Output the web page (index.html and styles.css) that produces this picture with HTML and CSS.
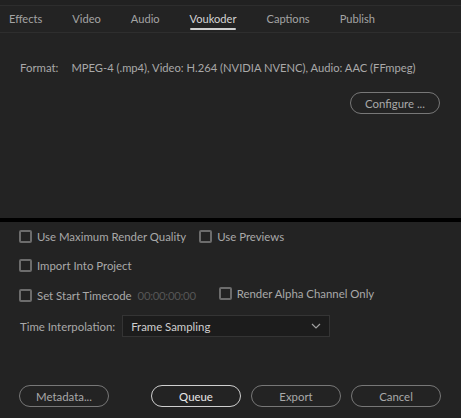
FILE: index.html
```html
<!DOCTYPE html>
<html>
<head>
<meta charset="utf-8">
<link rel="stylesheet" href="styles.css">
</head>
<body>
<div class="dialog">
  <div class="topstrip"></div>
  <nav class="tabs">
    <span class="tab">Effects</span>
    <span class="tab">Video</span>
    <span class="tab">Audio</span>
    <span class="tab active">Voukoder</span>
    <span class="tab">Captions</span>
    <span class="tab">Publish</span>
  </nav>
  <section class="upper">
    <div class="format">
      <span class="format-label">Format:</span>
      <span class="format-value">MPEG-4 (.mp4), Video: H.264 (NVIDIA NVENC), Audio: AAC (FFmpeg)</span>
    </div>
    <div class="configure-row">
      <button class="pill">Configure ...</button>
    </div>
  </section>
  <div class="divider"></div>
  <section class="lower">
    <div class="row r1">
      <label class="check"><span class="box"></span>Use Maximum Render Quality</label>
      <label class="check"><span class="box"></span>Use Previews</label>
    </div>
    <div class="row">
      <label class="check"><span class="box"></span>Import Into Project</label>
    </div>
    <div class="row">
      <label class="check"><span class="box"></span>Set Start Timecode</label>
      <span class="timecode">00:00:00:00</span>
      <label class="check alpha"><span class="box"></span>Render Alpha Channel Only</label>
    </div>
    <div class="row interp">
      <span class="interp-label">Time Interpolation:</span>
      <div class="select">
        <span>Frame Sampling</span>
        <svg class="chev" width="10" height="6" viewBox="0 0 10 6"><path d="M1 1 L5 5 L9 1" fill="none" stroke="#a0a0a0" stroke-width="1.2"/></svg>
      </div>
    </div>
    <div class="buttons">
      <button class="pill">Metadata...</button>
      <div class="right">
        <button class="pill primary">Queue</button>
        <button class="pill">Export</button>
        <button class="pill">Cancel</button>
      </div>
    </div>
  </section>
</div>
</body>
</html>
```
FILE: styles.css
```css
html, body {
  margin: 0;
  padding: 0;
  background: #232323;
}
body {
  font-family: Lato, "Open Sans", sans-serif;
  font-size: 11.4px;
  color: #a9a9a9;
  width: 461px;
  height: 418px;
  overflow: hidden;
}
.dialog {
  display: flex;
  flex-direction: column;
  height: 418px;
}
.topstrip {
  height: 5px;
  background: #212121;
  border-bottom: 1px solid #2d2d2d;
}
.tabs {
  display: flex;
  gap: 30px;
  padding-left: 9px;
  height: 26px;
  border-bottom: 1px solid #2e2e2e;
  align-items: stretch;
  font-size: 11.1px;
}
.tab {
  display: flex;
  align-items: center;
  position: relative;
  padding-bottom: 1px;
  color: #a4a4a4;
}
.tab.active {
  color: #d4d4d4;
}
.tab.active::after {
  content: "";
  position: absolute;
  left: 0;
  right: 0;
  bottom: 2px;
  height: 2px;
  background: #cfcfcf;
  border-radius: 1px;
}
.upper {
  height: 185px;
  display: flex;
  flex-direction: column;
}
.format {
  display: flex;
  gap: 13px;
  padding: 27px 0 0 20px;
  height: 16px;
  line-height: 16px;
}
.format-value {
  font-size: 11.2px;
}
.configure-row {
  display: flex;
  justify-content: flex-end;
  padding: 16px 21px 0 0;
}
.pill {
  font: inherit;
  color: #a9a9a9;
  background: transparent;
  border: 1px solid #777;
  border-radius: 11px;
  width: 90px;
  height: 22px;
  padding: 0;
}
.pill.primary {
  color: #e8e8e8;
  border-color: #cfcfcf;
}
.divider {
  height: 4px;
  background: #000;
}
.lower {
  flex: 1;
  display: flex;
  flex-direction: column;
  padding: 0 0 0 19px;
}
.row {
  display: flex;
  align-items: center;
  height: 30px;
}
.row.r1 {
  height: 28px;
}
.check {
  display: flex;
  align-items: center;
  gap: 5px;
  margin-right: 13px;
}
.box {
  width: 9px;
  height: 9px;
  border: 2px solid #6c6c6c;
  border-radius: 2px;
}
.timecode {
  color: #555;
  margin-left: -7px;
  letter-spacing: -0.3px;
}
.alpha {
  margin-left: 23px;
  position: relative;
  top: -2px;
}
.interp {
  height: 32px;
}
.interp-label {
  margin-left: 1px;
  margin-right: 7px;
}
.select {
  width: 190px;
  height: 20px;
  background: #1c1c1c;
  border: 1px solid #343434;
  display: flex;
  align-items: center;
  justify-content: space-between;
  padding: 0 8px 0 8px;
  color: #cfcfcf;
}
.buttons {
  display: flex;
  justify-content: space-between;
  padding: 0 20px 0 0;
  margin-top: 43px;
}
.right {
  display: flex;
  gap: 10px;
}
```
